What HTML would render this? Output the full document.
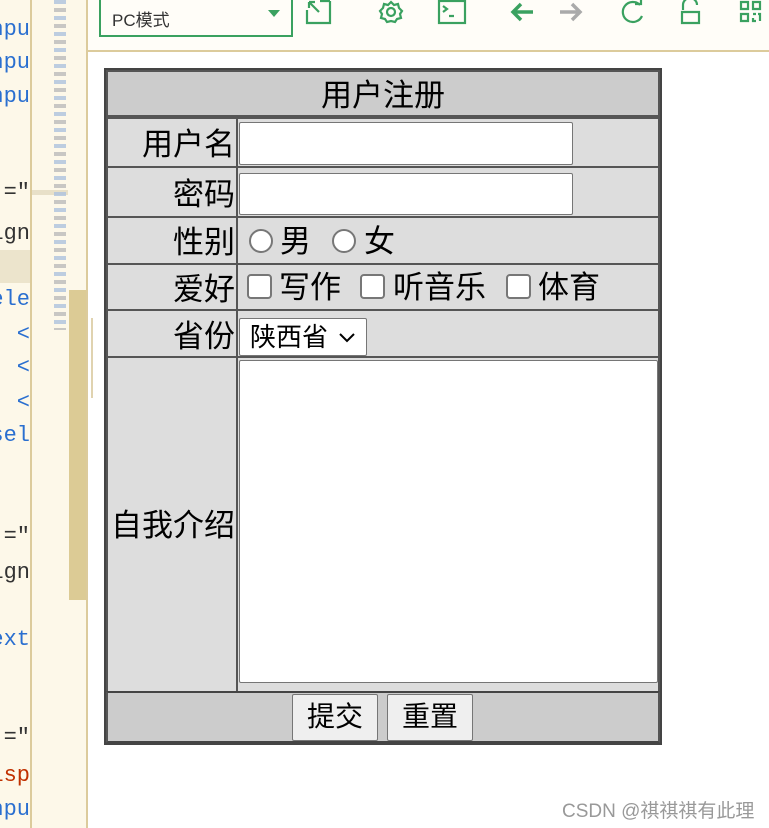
<!DOCTYPE html>
<html><head><meta charset="utf-8"><style>
*{margin:0;padding:0;box-sizing:border-box}
body{width:769px;height:828px;overflow:hidden;background:#fff;position:relative;font-family:"Liberation Sans","Noto Sans CJK SC",sans-serif}
.a{position:absolute}
.code{left:0;top:0;width:30px;height:828px;background:#fdf8e9;overflow:hidden}
.code div{position:absolute;right:0;font:22px "Liberation Mono","DejaVu Sans Mono",monospace;color:#2a6fd0;white-space:nowrap;line-height:24px}
.c{position:absolute;background:#ddd;border:2px solid #555;font-size:31px;color:#000}
.lbl{text-align:right;padding-right:1px}
.inp{position:absolute;background:#fff;border:1px solid #767676;border-radius:2px}
.rad{position:absolute;width:24px;height:24px;border:2px solid #777;border-radius:50%;background:#fff}
.chk{position:absolute;width:25px;height:25px;border:2px solid #777;border-radius:4px;background:#fff}
.t{position:absolute;font-size:31px;line-height:34px;color:#000}
.btn{position:absolute;background:#efefef;border:1px solid #767676;border-radius:2px;font-size:28px;text-align:center;line-height:44px}
</style></head><body>
<div class="a code">
<div style="top:18px">npu</div><div style="top:51px">npu</div><div style="top:85px">npu</div>
<div style="top:181px;color:#333">="</div><div style="top:222px;color:#333">ign</div>
<div style="top:250px;left:0;width:30px;height:33px;background:#ece4cc"></div>
<div style="top:288px">ele</div><div style="top:323px">&nbsp;&lt;</div><div style="top:356px">&nbsp;&lt;</div><div style="top:391px">&nbsp;&lt;</div>
<div style="top:424px">sel</div><div style="top:525px;color:#333">="</div><div style="top:561px;color:#333">ign</div>
<div style="top:628px">ext</div><div style="top:726px;color:#333">="</div><div style="top:764px;color:#c03000">isp</div><div style="top:798px">npu</div>
</div>
<div class="a" style="left:30px;top:0;width:2px;height:828px;background:#dccb9c"></div>
<div class="a" style="left:32px;top:0;width:54px;height:828px;background:#fdf8e9"></div>
<div class="a" style="left:32px;top:190px;width:36px;height:5px;background:#e8e0c8"></div>
<div class="a" style="left:69px;top:290px;width:17px;height:310px;background:#dccb95"></div>
<div class="a" style="left:54px;top:0;width:12px;height:330px;background:repeating-linear-gradient(#adc2de 0 4px,transparent 4px 8px,#bbb 8px 12px,transparent 12px 16px);opacity:.8"></div>
<div class="a" style="left:86px;top:0;width:2px;height:828px;background:#dccb9c"></div>
<div class="a" style="left:91px;top:318px;width:2px;height:80px;background:#e0d3b0"></div>
<div class="a" style="left:88px;top:0;width:681px;height:50px;background:#fffdf8"></div>
<div class="a" style="left:88px;top:50px;width:681px;height:2px;background:#dccb9c"></div>
<div class="a" style="left:99px;top:-3px;width:194px;height:40px;border:2px solid #3aa160;background:#fffdf8;font-size:17px;color:#333;padding:7px 0 0 11px">PC模式</div>
<div class="a" style="left:268px;top:10px;width:0;height:0;border-left:6px solid transparent;border-right:6px solid transparent;border-top:7px solid #3aa160"></div>
<svg class="a" style="left:300px;top:0" width="469" height="30" fill="none" stroke="#3aa160" stroke-width="2.2">
<path d="M30 1v22h-23v-13M20 1h10M9 2l10 10M9 2v6M9 2h6"/>
<circle cx="91" cy="12" r="4"/><path d="M91 2l3 3 4-1 1 4 3 3-2 3 1 4-4 1-2 3-4-1-4 1-2-3-4-1 1-4-2-3 3-3 1-4 4 1z"/>
<rect x="139" y="1" width="26" height="22"/><path d="M143 6l4 3-4 3M149 16h5"/>
<path d="M233 12h-20M221 4l-8 8 8 8" stroke-width="3.5"/>
<path d="M260 12h20M272 4l8 8-8 8" stroke="#aaa" stroke-width="3.5"/>
<path d="M340 5a10 10 0 1 0 2 11M335 4h6v-6"/>
<path d="M383 10v-5a7 7 0 0 1 14 0M382 12h17v11h-17z"/>
<path d="M441 2h7v7h-7zM453 2h7v7h-7zM441 14h7v7h-7zM453 14h3M458 14h2v7M453 18v3h3"/>
</svg>
<div class="a" style="left:104px;top:68px;width:558px;height:677px;border:2px solid #444;background:#ccc"></div>
<div class="c" style="left:106px;top:70px;width:554px;height:47px;background:#ccc;text-align:center;line-height:48px">用户注册</div>
<div class="c lbl" style="left:106px;top:117px;width:132px;height:51px;line-height:52px">用户名</div>
<div class="c" style="left:236px;top:117px;width:424px;height:51px"></div>
<div class="inp" style="left:239px;top:122px;width:334px;height:43px"></div>
<div class="c lbl" style="left:106px;top:166px;width:132px;height:52px;line-height:54px">密码</div>
<div class="c" style="left:236px;top:166px;width:424px;height:52px"></div>
<div class="inp" style="left:239px;top:173px;width:334px;height:42px"></div>
<div class="c lbl" style="left:106px;top:216px;width:132px;height:49px;line-height:50px">性别</div>
<div class="c" style="left:236px;top:216px;width:424px;height:49px"></div>
<div class="rad" style="left:249px;top:229px"></div><div class="t" style="left:280px;top:225px">男</div>
<div class="rad" style="left:332px;top:229px"></div><div class="t" style="left:364px;top:225px">女</div>
<div class="c lbl" style="left:106px;top:263px;width:132px;height:48px;line-height:50px">爱好</div>
<div class="c" style="left:236px;top:263px;width:424px;height:48px"></div>
<div class="chk" style="left:247px;top:274px"></div><div class="t" style="left:279px;top:271px">写作</div>
<div class="chk" style="left:360px;top:274px"></div><div class="t" style="left:393px;top:271px">听音乐</div>
<div class="chk" style="left:506px;top:274px"></div><div class="t" style="left:538px;top:271px">体育</div>
<div class="c lbl" style="left:106px;top:309px;width:132px;height:49px;line-height:52px">省份</div>
<div class="c" style="left:236px;top:309px;width:424px;height:49px"></div>
<div class="inp" style="left:239px;top:318px;width:128px;height:38px;font-size:26px;line-height:36px;padding-left:10px">陕西省<svg style="position:absolute;left:99px;top:14px" width="16" height="10" fill="none" stroke="#000" stroke-width="2"><path d="M1 1l7 7 7-7"/></svg></div>
<div class="c lbl" style="left:106px;top:356px;width:132px;height:337px;line-height:335px">自我介绍</div>
<div class="c" style="left:236px;top:356px;width:424px;height:337px"></div>
<div class="inp" style="left:239px;top:360px;width:419px;height:323px"></div>
<div class="c" style="left:106px;top:691px;width:554px;height:52px;background:#ccc;border-color:#444 #555"></div>
<div class="btn" style="left:292px;top:694px;width:86px;height:47px">提交</div>
<div class="btn" style="left:387px;top:694px;width:86px;height:47px">重置</div>
<div class="a" style="left:562px;top:796px;font-size:19px;color:#999">CSDN @祺祺祺有此理</div>
</body></html>
